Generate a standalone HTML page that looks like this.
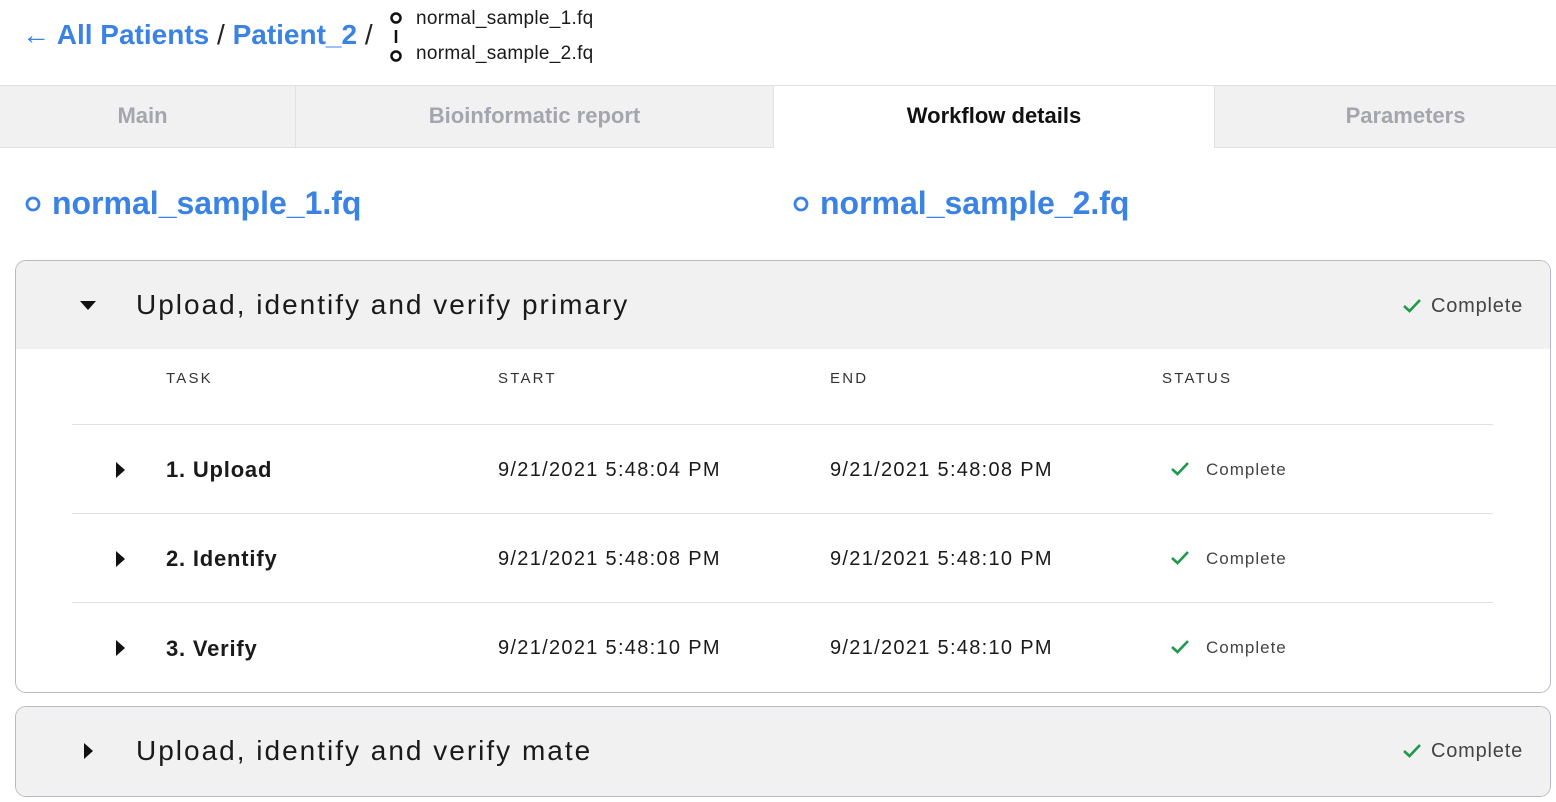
<!DOCTYPE html>
<html><head><style>
*{box-sizing:border-box;margin:0;padding:0}
body{width:1556px;height:802px;overflow:hidden;background:#fff;font-family:"Liberation Sans",sans-serif;color:#1a1a1a;position:relative}
.a{position:absolute;white-space:nowrap}
.blue{color:#3a82e4}
.tabs{position:absolute;top:85px;left:0;width:1556px;height:63px;background:#f1f1f1;border-top:1px solid #e2e2e6;border-bottom:1px solid #e2e2e6}
.tab{position:absolute;top:0;height:61px;line-height:60px;text-align:center;font-size:22px;font-weight:bold;color:#a5a5b0;border-right:1px solid #e2e2e6}
.panel{position:absolute;left:15px;width:1536px;border:1px solid #b9b9c3;border-radius:11px;overflow:hidden}
.ph{position:absolute;left:0;top:0;width:100%;height:88px;background:#f1f1f1}
.th{font-size:15px;letter-spacing:2.2px;color:#333}
.row{font-size:20px;letter-spacing:1.3px}
.line{position:absolute;left:56px;width:1421px;height:1px;background:#e0e0e4}
.ttl{font-size:28px;letter-spacing:2px}
</style></head><body>
<div class="a blue" style="left:22px;top:19px;font-size:28px;font-weight:bold">← All Patients <span style="color:#222;font-weight:normal">/</span> Patient_2 <span style="color:#222;font-weight:normal">/</span></div>
<svg class="a" style="left:388px;top:10px" width="16" height="54"><circle cx="8" cy="8" r="4.5" fill="none" stroke="#111" stroke-width="2.5"/><line x1="8" y1="20" x2="8" y2="33" stroke="#111" stroke-width="2.5"/><circle cx="8" cy="46" r="4.5" fill="none" stroke="#111" stroke-width="2.5"/></svg>
<div class="a" style="left:416px;top:8px;font-size:19px;letter-spacing:.3px">normal_sample_1.fq</div>
<div class="a" style="left:416px;top:43px;font-size:19px;letter-spacing:.3px">normal_sample_2.fq</div>
<div class="tabs">
<div class="tab" style="left:0;width:296px;padding-right:10px">Main</div>
<div class="tab" style="left:296px;width:478px">Bioinformatic report</div>
<div class="tab" style="left:774px;width:441px;background:#fff;color:#111;height:62px">Workflow details</div>
<div class="tab" style="left:1215px;width:341px;border:none;padding-left:40px">Parameters</div>
</div>
<svg class="a" style="left:24px;top:195px" width="18" height="18"><circle cx="9" cy="9" r="6" fill="none" stroke="#3a82e4" stroke-width="2.8"/></svg>
<div class="a blue" style="left:52px;top:185px;font-size:32px;font-weight:bold">normal_sample_1.fq</div>
<svg class="a" style="left:792px;top:195px" width="18" height="18"><circle cx="9" cy="9" r="6" fill="none" stroke="#3a82e4" stroke-width="2.8"/></svg>
<div class="a blue" style="left:820px;top:185px;font-size:32px;font-weight:bold">normal_sample_2.fq</div>

<div class="panel" style="top:260px;height:433px">
<div class="ph"></div>
<svg class="a" style="left:64px;top:40px" width="16" height="10"><path d="M0 0H16L8 9Z" fill="#111"/></svg>
<div class="a ttl" style="left:120px;top:28px">Upload, identify and verify primary</div>
<svg class="a" style="left:1386px;top:37px" width="20" height="16"><path d="M2 8L7.5 13L18 2" fill="none" stroke="#1e9a4c" stroke-width="2.6"/></svg>
<div class="a" style="left:1415px;top:34px;font-size:20px;color:#444;letter-spacing:.8px">Complete</div>
<div class="a th" style="left:150px;top:109px">TASK</div>
<div class="a th" style="left:482px;top:109px">START</div>
<div class="a th" style="left:814px;top:109px">END</div>
<div class="a th" style="left:1146px;top:109px">STATUS</div>
<div class="line" style="top:163px"></div>
<div class="line" style="top:252px"></div>
<div class="line" style="top:341px"></div>
<svg class="a" style="left:100px;top:201px" width="10" height="16"><path d="M0 0L9 8L0 16Z" fill="#111"/></svg>
<div class="a row" style="left:150px;top:196px;font-weight:bold;font-size:22px;letter-spacing:.8px">1. Upload</div>
<div class="a row" style="left:482px;top:198px">9/21/2021 5:48:04 PM</div>
<div class="a row" style="left:814px;top:198px">9/21/2021 5:48:08 PM</div>
<svg class="a" style="left:1154px;top:200px" width="20" height="16"><path d="M2 8L7.5 13L18 2" fill="none" stroke="#1e9a4c" stroke-width="2.6"/></svg>
<div class="a" style="left:1190px;top:199px;font-size:17px;color:#444;letter-spacing:1px">Complete</div>

<svg class="a" style="left:100px;top:290px" width="10" height="16"><path d="M0 0L9 8L0 16Z" fill="#111"/></svg>
<div class="a row" style="left:150px;top:285px;font-weight:bold;font-size:22px;letter-spacing:.8px">2. Identify</div>
<div class="a row" style="left:482px;top:287px">9/21/2021 5:48:08 PM</div>
<div class="a row" style="left:814px;top:287px">9/21/2021 5:48:10 PM</div>
<svg class="a" style="left:1154px;top:289px" width="20" height="16"><path d="M2 8L7.5 13L18 2" fill="none" stroke="#1e9a4c" stroke-width="2.6"/></svg>
<div class="a" style="left:1190px;top:288px;font-size:17px;color:#444;letter-spacing:1px">Complete</div>

<svg class="a" style="left:100px;top:379px" width="10" height="16"><path d="M0 0L9 8L0 16Z" fill="#111"/></svg>
<div class="a row" style="left:150px;top:375px;font-weight:bold;font-size:22px;letter-spacing:.8px">3. Verify</div>
<div class="a row" style="left:482px;top:376px">9/21/2021 5:48:10 PM</div>
<div class="a row" style="left:814px;top:376px">9/21/2021 5:48:10 PM</div>
<svg class="a" style="left:1154px;top:378px" width="20" height="16"><path d="M2 8L7.5 13L18 2" fill="none" stroke="#1e9a4c" stroke-width="2.6"/></svg>
<div class="a" style="left:1190px;top:377px;font-size:17px;color:#444;letter-spacing:1px">Complete</div>
</div>

<div class="panel" style="top:706px;height:91px">
<div class="ph" style="height:91px"></div>
<svg class="a" style="left:68px;top:36px" width="10" height="16"><path d="M0 0L9 8L0 16Z" fill="#111"/></svg>
<div class="a ttl" style="left:120px;top:28px">Upload, identify and verify mate</div>
<svg class="a" style="left:1386px;top:36px" width="20" height="16"><path d="M2 8L7.5 13L18 2" fill="none" stroke="#1e9a4c" stroke-width="2.6"/></svg>
<div class="a" style="left:1415px;top:33px;font-size:20px;color:#444;letter-spacing:.8px">Complete</div>
</div>
</body></html>
